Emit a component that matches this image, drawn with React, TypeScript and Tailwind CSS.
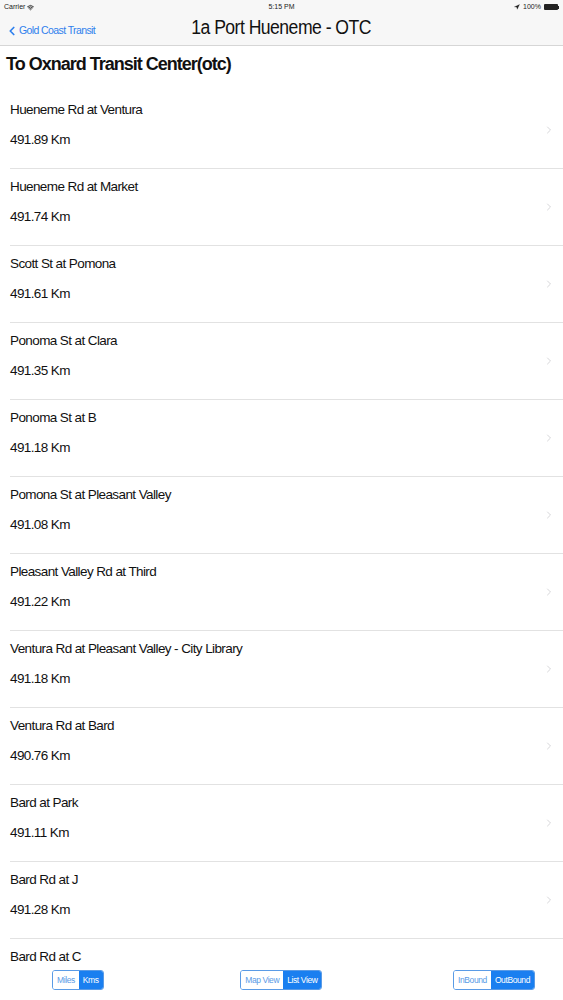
import { ChevronLeft, ChevronRight, Wifi, Navigation } from 'lucide-react'

interface Stop {
  name: string
  distance?: string
}

// last stop is cut off by the toolbar, only its name shows
const STOPS: Stop[] = [
  { name: 'Hueneme Rd at Ventura', distance: '491.89 Km' },
  { name: 'Hueneme Rd at Market', distance: '491.74 Km' },
  { name: 'Scott St at Pomona', distance: '491.61 Km' },
  { name: 'Ponoma St at Clara', distance: '491.35 Km' },
  { name: 'Ponoma St at B', distance: '491.18 Km' },
  { name: 'Pomona St at Pleasant Valley', distance: '491.08 Km' },
  { name: 'Pleasant Valley Rd at Third', distance: '491.22 Km' },
  { name: 'Ventura Rd at Pleasant Valley - City Library', distance: '491.18 Km' },
  { name: 'Ventura Rd at Bard', distance: '490.76 Km' },
  { name: 'Bard at Park', distance: '491.11 Km' },
  { name: 'Bard Rd at J', distance: '491.28 Km' },
  { name: 'Bard Rd at C' },
]

function Segmented({ left, right }: { left: string; right: string }) {
  return (
    <div className="flex h-[20px] overflow-hidden rounded-[3px] border border-[#5a9be6] text-[8.5px] tracking-[-0.4px]">
      <span className="flex items-center bg-white px-[4px] text-[#5a9be6]">{left}</span>
      <span className="flex items-center bg-[#1a7ff0] px-[4px] text-white">{right}</span>
    </div>
  )
}

export default function App() {
  return (
    <div className="flex h-[1000px] w-[563px] flex-col overflow-hidden bg-white font-['Liberation_Sans',Arial,sans-serif] text-[#111]">
      {/* status bar + nav */}
      <div className="border-b border-[#d6d6d6] bg-[#f7f7f7]">
        <div className="flex h-[14px] items-center justify-between px-[4px] text-[7px] text-[#222]">
          <span className="flex w-[100px] items-center gap-[2px]">
            Carrier <Wifi className="size-[7px]" strokeWidth={3} />
          </span>
          <span>5:15 PM</span>
          <span className="flex w-[100px] items-center justify-end gap-[3px]">
            <Navigation className="size-[6px] fill-[#222]" strokeWidth={1} />
            100%
            <span className="flex items-center">
              <span className="h-[6px] w-[14px] rounded-[1px] bg-[#222]" />
              <span className="h-[3px] w-[1px] bg-[#222]" />
            </span>
          </span>
        </div>
        <div className="relative flex h-[31px] items-center">
          <div className="flex items-center pl-[5px] pt-[2px] text-[#2f80ed]">
            <ChevronLeft className="size-[14px]" strokeWidth={3} />
            <span className="text-[10.5px] tracking-[-0.6px]">Gold Coast Transit</span>
          </div>
          <div className="absolute left-0 right-0 top-[1px] text-center text-[20px] leading-[24px] tracking-[-0.6px] text-[#111]">
            <span className="inline-block scale-x-[0.88]">1a Port Hueneme - OTC</span>
          </div>
        </div>
      </div>

      <div className="h-[46px] shrink-0 pl-[6px] pt-[8px] text-[18px] font-bold leading-[20px] tracking-[-1px]">
        To Oxnard Transit Center(otc)
      </div>

      <ul className="min-h-0 flex-1 overflow-hidden">
        {STOPS.map((s) => (
          <li key={s.name} className="pl-[10px]">
            <div className="flex h-[77px] items-center border-b border-[#e2e2e2] pr-[8px]">
              <div className="flex flex-1 flex-col gap-[14px] self-start pt-[10px] text-[13.5px] leading-[16px] tracking-[-0.6px]">
                <span>{s.name}</span>
                {s.distance && <span>{s.distance}</span>}
              </div>
              <ChevronRight className="size-[12px] text-[#c8c8cc]" strokeWidth={1.5} />
            </div>
          </li>
        ))}
      </ul>

      <div className="flex h-[36px] shrink-0 items-start justify-between bg-white pl-[52px] pr-[28px] pt-[6px]">
        <Segmented left="Miles" right="Kms" />
        <div className="pl-[6px]">
          <Segmented left="Map View" right="List View" />
        </div>
        <Segmented left="InBound" right="OutBound" />
      </div>
    </div>
  )
}
